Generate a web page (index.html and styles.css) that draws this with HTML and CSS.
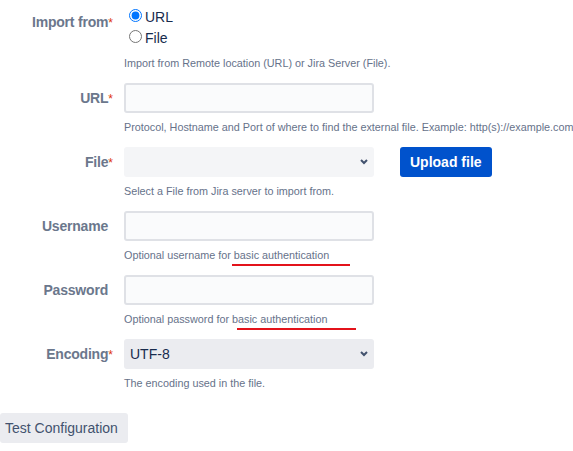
FILE: index.html
```html
<!DOCTYPE html>
<html>
<head>
<meta charset="utf-8">
<link rel="stylesheet" href="styles.css">
</head>
<body>
<form class="form">
  <div class="row">
    <label class="label">Import from<span class="req">*</span></label>
    <div class="field">
      <div class="radios">
        <label class="radio"><input type="radio" name="src" checked>URL</label>
        <label class="radio"><input type="radio" name="src">File</label>
      </div>
      <div class="help">Import from Remote location (URL) or Jira Server (File).</div>
    </div>
  </div>

  <div class="row">
    <label class="label">URL<span class="req">*</span></label>
    <div class="field">
      <input class="text" type="text">
      <div class="help">Protocol, Hostname and Port of where to find the external file. Example: http(s)://example.com</div>
    </div>
  </div>

  <div class="row">
    <label class="label">File<span class="req">*</span></label>
    <div class="field">
      <div class="file-line">
        <div class="select-wrap">
          <select class="select"><option></option></select>
          <svg class="chev" viewBox="0 0 8 6"><path d="M1 1 L4 4 L7 1" fill="none" stroke="#42526e" stroke-width="2"/></svg>
        </div>
        <button type="button" class="btn-primary">Upload file</button>
      </div>
      <div class="help">Select a File from Jira server to import from.</div>
    </div>
  </div>

  <div class="row">
    <label class="label">Username</label>
    <div class="field">
      <input class="text" type="text">
      <div class="help">Optional username for <span class="mark mark-user">basic authentication</span></div>
    </div>
  </div>

  <div class="row">
    <label class="label">Password</label>
    <div class="field">
      <input class="text" type="password">
      <div class="help">Optional password for <span class="mark mark-pw">basic authentication</span></div>
    </div>
  </div>

  <div class="row">
    <label class="label">Encoding<span class="req">*</span></label>
    <div class="field">
      <div class="select-wrap">
        <select class="select select-strong"><option>UTF-8</option></select>
        <svg class="chev" viewBox="0 0 8 6"><path d="M1 1 L4 4 L7 1" fill="none" stroke="#42526e" stroke-width="2"/></svg>
      </div>
      <div class="help">The encoding used in the file.</div>
    </div>
  </div>

  <button type="button" class="btn-default">Test Configuration</button>
</form>
</body>
</html>
```

FILE: styles.css
```css
* { box-sizing: border-box; }
html, body { margin: 0; padding: 0; background: #fff; }
body {
  font-family: "Liberation Sans", Arial, sans-serif;
  color: #172b4d;
  overflow: hidden;
}
.form {
  padding-top: 7px;
  display: flex;
  flex-direction: column;
}
.row {
  display: grid;
  grid-template-columns: 108px 1fr;
  column-gap: 16px;
  margin-bottom: 12px;
}
.label {
  font-size: 14px;
  font-weight: 700;
  color: #6b778c;
  text-align: right;
  line-height: 30px;
  white-space: nowrap;
  letter-spacing: -0.2px;
}
.req {
  color: #de350b;
  font-weight: 400;
  font-size: 12px;
  margin-right: -5px;
  letter-spacing: 0;
}
.field { min-width: 0; }
.radios {
  display: flex;
  flex-direction: column;
  font-size: 14px;
  line-height: 21px;
  color: #172b4d;
}
.radio input {
  margin: 0 3px 0 5px;
  width: 13px;
  height: 13px;
}
.help {
  margin-top: 6px;
  font-size: 10.8px;
  line-height: 16px;
  color: #66728a;
  white-space: nowrap;
}
.text {
  display: block;
  width: 250px;
  height: 30px;
  border: 2px solid #dfe1e6;
  border-radius: 3px;
  background: #fafbfc;
  font: 14px "Liberation Sans", Arial, sans-serif;
}
.select-wrap {
  position: relative;
  width: 250px;
  height: 30px;
}
.select {
  appearance: none;
  -webkit-appearance: none;
  display: block;
  width: 100%;
  height: 100%;
  border: 0;
  border-radius: 3px;
  background: #f4f5f7;
  font: 14px "Liberation Sans", Arial, sans-serif;
  color: #172b4d;
  padding: 0 6px;
}
.select-strong { background: #ebecf0; }
.chev {
  position: absolute;
  right: 6px;
  top: 12px;
  width: 8px;
  height: 6px;
  pointer-events: none;
}
.file-line {
  display: flex;
  gap: 26px;
}
.btn-primary {
  height: 30px;
  padding: 0 10px;
  border: 0;
  border-radius: 3px;
  background: #0052cc;
  color: #fff;
  font: 700 14px "Liberation Sans", Arial, sans-serif;
}
.btn-default {
  margin-top: 10px;
  align-self: flex-start;
  width: 128px;
  height: 30px;
  padding: 0 0 0 5px;
  text-align: left;
  border: 0;
  border-radius: 3px;
  background: #ebecf0;
  color: #42526e;
  font: 14px "Liberation Sans", Arial, sans-serif;
}
.mark { position: relative; }
.mark::after {
  content: "";
  position: absolute;
  height: 2px;
  bottom: -5px;
  background: #e3131b;
}
.mark-user::after { left: -2px; width: 118px; }
.mark-pw::after { left: 5px; width: 119px; }
```
